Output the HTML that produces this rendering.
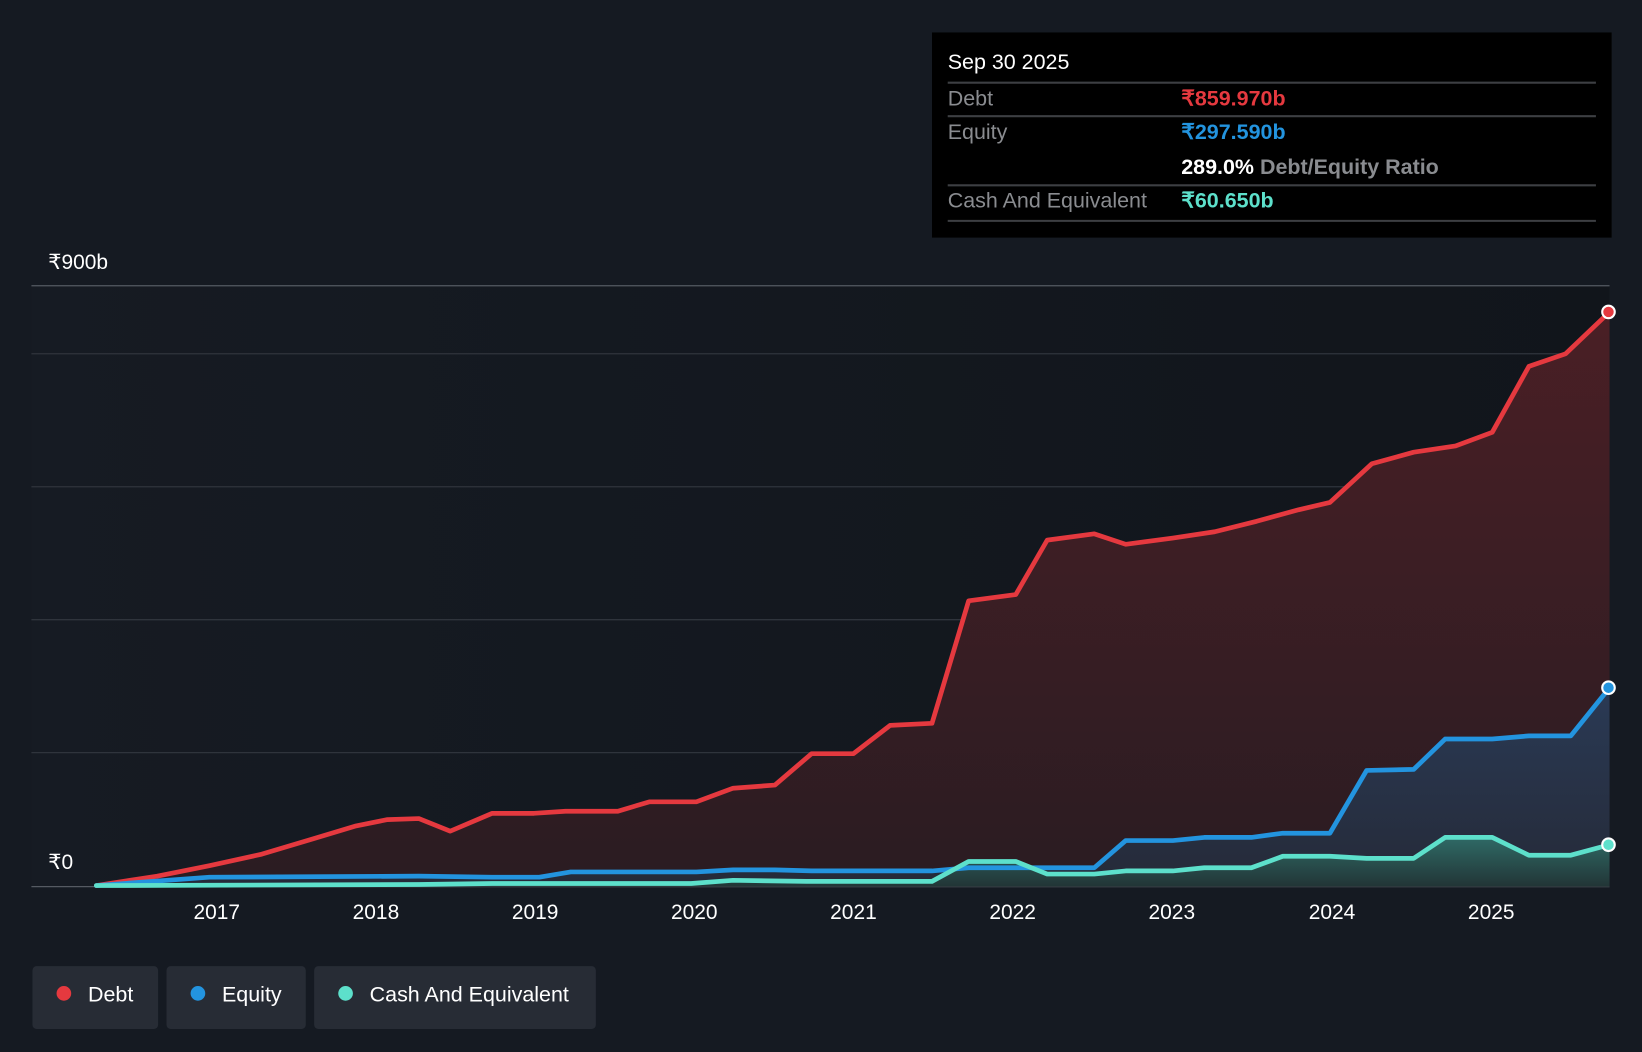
<!DOCTYPE html>
<html><head><meta charset="utf-8"><style>
html,body{margin:0;padding:0;background:#151a22;}
svg{display:block}
text{font-family:"Liberation Sans",sans-serif;}
</style></head><body>
<svg width="1642" height="1052" viewBox="0 0 1568 1005" preserveAspectRatio="none" xmlns="http://www.w3.org/2000/svg">
<defs>
<linearGradient id="bg" x1="0" x2="1" y1="0" y2="0"><stop offset="0" stop-color="#161b23"/><stop offset="1" stop-color="#11151b"/></linearGradient>
<linearGradient id="dg" x1="0" x2="0" y1="0" y2="1"><stop offset="0" stop-color="#4a1f25"/><stop offset="1" stop-color="#2a1c22"/></linearGradient>
<linearGradient id="eg" x1="0" x2="0" y1="0" y2="1"><stop offset="0" stop-color="#2a3a55"/><stop offset="1" stop-color="#252a38"/></linearGradient>
<linearGradient id="cg" x1="0" x2="0" y1="0" y2="1"><stop offset="0" stop-color="#2f6a66"/><stop offset="1" stop-color="#223536"/></linearGradient>
</defs>
<rect width="1568" height="1005" fill="#151a22"/>
<rect x="30" y="273" width="1507" height="574" fill="url(#bg)"/>
<g stroke="#2f343c" stroke-width="1.2">
<line x1="30" y1="273" x2="1537" y2="273" stroke="#555a62"/>
<line x1="30" y1="338" x2="1537" y2="338"/>
<line x1="30" y1="465" x2="1537" y2="465"/>
<line x1="30" y1="592" x2="1537" y2="592"/>
<line x1="30" y1="719" x2="1537" y2="719"/>
<line x1="30" y1="847" x2="1537" y2="847" stroke="#555a62"/>
</g>
<polygon fill="url(#dg)" points="92,846 150,837 200,827 250,816 300,801 340,789 370,783 400,782 430,794 470,777 510,777 540,775 590,775 620,766 665,766 700,753 740,750 775,720 815,720 850,693 890,691 925,574 970,568 1000,516 1045,510 1075,520 1120,514 1160,508 1200,498 1240,487 1270,480 1310,443 1350,432 1390,426 1425,413 1460,350 1495,338 1537,298 1537,847 92,847"/>
<polygon fill="url(#eg)" points="92,846 200,838 400,837 470,838 515,838 545,833 665,833 700,831 740,831 775,832 890,832 925,829 1045,829 1075,803 1120,803 1150,800 1195,800 1225,796 1270,796 1305,736 1350,735 1380,706 1425,706 1460,703 1500,703 1537,657 1537,847 92,847"/>
<polygon fill="url(#cg)" points="92,846 400,845 470,844 660,844 700,841 770,842 890,842 925,823 970,823 1000,835 1045,835 1075,832 1120,832 1150,829 1195,829 1225,818 1270,818 1305,820 1350,820 1380,800 1425,800 1460,817 1500,817 1537,807 1537,847 92,847"/>
<g fill="none" stroke-width="4.5" stroke-linejoin="round" stroke-linecap="round">
<polyline stroke="#e5393f" points="92,846 150,837 200,827 250,816 300,801 340,789 370,783 400,782 430,794 470,777 510,777 540,775 590,775 620,766 665,766 700,753 740,750 775,720 815,720 850,693 890,691 925,574 970,568 1000,516 1045,510 1075,520 1120,514 1160,508 1200,498 1240,487 1270,480 1310,443 1350,432 1390,426 1425,413 1460,350 1495,338 1537,298"/>
<polyline stroke="#2394df" points="92,846 200,838 400,837 470,838 515,838 545,833 665,833 700,831 740,831 775,832 890,832 925,829 1045,829 1075,803 1120,803 1150,800 1195,800 1225,796 1270,796 1305,736 1350,735 1380,706 1425,706 1460,703 1500,703 1537,657"/>
<polyline stroke="#5de0cb" points="92,846 400,845 470,844 660,844 700,841 770,842 890,842 925,823 970,823 1000,835 1045,835 1075,832 1120,832 1150,829 1195,829 1225,818 1270,818 1305,820 1350,820 1380,800 1425,800 1460,817 1500,817 1537,807"/>
</g>
<circle cx="1536" cy="298" r="6" fill="#e5393f" stroke="#fff" stroke-width="2"/>
<circle cx="1536" cy="657" r="6" fill="#2394df" stroke="#fff" stroke-width="2"/>
<circle cx="1536" cy="807" r="6" fill="#5de0cb" stroke="#fff" stroke-width="2"/>
<text x="46" y="257" fill="#fff" font-size="20">₹900b</text>
<text x="46" y="830" fill="#fff" font-size="20">₹0</text>
<g fill="#fff" font-size="20" text-anchor="middle">
<text x="207" y="878">2017</text><text x="359" y="878">2018</text><text x="511" y="878">2019</text><text x="663" y="878">2020</text><text x="815" y="878">2021</text><text x="967" y="878">2022</text><text x="1119" y="878">2023</text><text x="1272" y="878">2024</text><text x="1424" y="878">2025</text>
</g>
<rect x="890" y="31" width="649" height="196" fill="#000"/>
<text x="905" y="66" fill="#fff" font-size="20.5">Sep 30 2025</text>
<g stroke="#3d3f43" stroke-width="2"><line x1="905" y1="79" x2="1524" y2="79"/><line x1="905" y1="111" x2="1524" y2="111"/><line x1="905" y1="177" x2="1524" y2="177"/><line x1="905" y1="211" x2="1524" y2="211"/></g>
<g font-size="20.5">
<text x="905" y="101" fill="#8a8c90">Debt</text><text x="1128" y="101" fill="#e5393f" font-weight="bold">₹859.970b</text>
<text x="905" y="133" fill="#8a8c90">Equity</text><text x="1128" y="133" fill="#2394df" font-weight="bold">₹297.590b</text>
<text x="1128" y="166" fill="#fff" font-weight="bold">289.0% <tspan fill="#8a8c90">Debt/Equity Ratio</tspan></text>
<text x="905" y="198" fill="#8a8c90">Cash And Equivalent</text><text x="1128" y="198" fill="#5de0cb" font-weight="bold">₹60.650b</text>
</g>
<rect x="31" y="923" width="120" height="60" rx="4" fill="#272c35"/>
<rect x="159" y="923" width="133" height="60" rx="4" fill="#272c35"/>
<rect x="300" y="923" width="269" height="60" rx="4" fill="#272c35"/>
<circle cx="61" cy="949" r="7" fill="#e5393f"/><circle cx="189" cy="949" r="7" fill="#2394df"/><circle cx="330" cy="949" r="7" fill="#5de0cb"/>
<g fill="#fff" font-size="20.5"><text x="84" y="957">Debt</text><text x="212" y="957">Equity</text><text x="353" y="957">Cash And Equivalent</text></g>
</svg>
</body></html>
